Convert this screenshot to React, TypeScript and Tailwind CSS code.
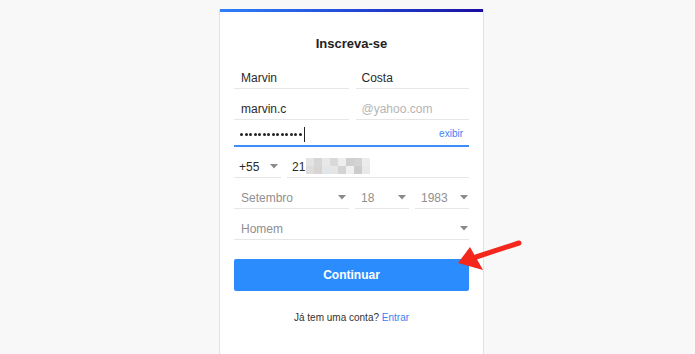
import React from "react";

const font = { fontFamily: '"Liberation Sans", Arial, sans-serif' };

function Caret() {
  return (
    <svg width="8" height="5" viewBox="0 0 8 5" className="shrink-0">
      <path d="M0 0h8L4 4.5z" fill="#8a8a8a" />
    </svg>
  );
}

// pixelated (blurred) phone digits
const mosaic = [
  ["#e4e4e4", "#d6d6d6", "#e8e8e8", "#d9d9d9", "#eeeeee", "#cfcfcf", "#d3d3d3", "#ececec"],
  ["#dfdcdc", "#d9d4d4", "#e2e6ea", "#e6e6e6", "#d4d4d4", "#f0f0f0", "#cccccc", "#e9e9e9"],
];

export default function App() {
  return (
    <div className="relative w-full h-[354px] overflow-hidden bg-[#f8f8f8]" style={font}>
      <div className="ml-[219px] mt-[9px] w-[265px] h-[345px] bg-white border-x border-[#e2e2e2]">
        <div className="h-[3px] bg-gradient-to-r from-[#2f80f7] via-[#2448d8] to-[#1a0aa0]" />

        <div className="px-[14px]">
          <h1 className="pt-[24px] text-center text-[13px] font-bold text-[#222] leading-[16px]">
            Inscreva-se
          </h1>

          {/* nome */}
          <div className="mt-[6px] flex gap-[7px]">
            <div className="flex-1 h-[31px] flex items-end pl-[7px] pb-[1px] border-b border-[#e6e6e6] text-[12px] text-[#2a2a2a]">
              Marvin
            </div>
            <div className="flex-1 h-[31px] flex items-end pl-[6px] pb-[1px] border-b border-[#e6e6e6] text-[12px] text-[#2a2a2a]">
              Costa
            </div>
          </div>

          {/* email */}
          <div className="flex gap-[7px]">
            <div className="flex-1 h-[31px] flex items-end pl-[7px] pb-[1px] border-b border-[#e6e6e6] text-[12px] text-[#2a2a2a]">
              marvin.c
            </div>
            <div className="flex-1 h-[31px] flex items-end pl-[6px] pb-[1px] border-b border-[#e6e6e6] text-[12px] text-[#b5b5b5]">
              @yahoo.com
            </div>
          </div>

          {/* senha */}
          <div className="h-[27px] flex items-end justify-between pl-[6px] pb-[3px] border-b-2 border-[#3d8ef8]">
            <div className="flex items-center h-[16px]">
              <div className="flex gap-[1.5px]">
                {Array.from({ length: 14 }).map((_, i) => (
                  <span key={i} className="w-[3px] h-[3px] rounded-full bg-[#222]" />
                ))}
              </div>
              <span className="ml-[2px] w-px h-[15px] bg-[#222]" />
            </div>
            <span className="text-[10px] text-[#3b82f6] pr-[6px] pb-[1px]">exibir</span>
          </div>

          {/* telefone */}
          <div className="flex gap-[6px]">
            <div className="w-[47px] h-[31px] flex items-end justify-between pl-[5px] pb-[1px] pr-[3px] border-b border-[#e6e6e6] text-[12px] text-[#2a2a2a]">
              <span>+55</span>
              <span className="pb-[7px]">
                <Caret />
              </span>
            </div>
            <div className="flex-1 h-[31px] flex items-end pl-[5px] pb-[1px] border-b border-[#e6e6e6] text-[12px] text-[#2a2a2a]">
              <span>21</span>
              <div className="ml-[1px] mb-[2px] flex flex-col">
                {mosaic.map((row, i) => (
                  <div key={i} className="flex">
                    {row.map((c, j) => (
                      <div key={j} className="w-[8px] h-[8px]" style={{ backgroundColor: c }} />
                    ))}
                  </div>
                ))}
              </div>
            </div>
          </div>

          {/* nascimento */}
          <div className="flex gap-[6px]">
            <div className="w-[115px] h-[31px] flex items-end justify-between pl-[7px] pb-[1px] pr-[3px] border-b border-[#e6e6e6] text-[12px] text-[#8f8f8f]">
              <span>Setembro</span>
              <span className="pb-[7px]">
                <Caret />
              </span>
            </div>
            <div className="w-[54px] h-[31px] flex items-end justify-between pl-[6px] pb-[1px] pr-[3px] border-b border-[#e6e6e6] text-[12px] text-[#8f8f8f]">
              <span>18</span>
              <span className="pb-[7px]">
                <Caret />
              </span>
            </div>
            <div className="flex-1 h-[31px] flex items-end justify-between pl-[6px] pb-[1px] pr-[1px] border-b border-[#e6e6e6] text-[12px] text-[#8f8f8f]">
              <span>1983</span>
              <span className="pb-[7px]">
                <Caret />
              </span>
            </div>
          </div>

          {/* sexo */}
          <div className="h-[31px] flex items-end justify-between pl-[7px] pb-[1px] pr-[1px] border-b border-[#e6e6e6] text-[12px] text-[#8f8f8f]">
            <span>Homem</span>
            <span className="pb-[7px]">
              <Caret />
            </span>
          </div>

          <button className="mt-[19px] w-full h-[32px] rounded-[2px] bg-[#2b8cfe] text-white text-[12px] font-bold">
            Continuar
          </button>

          <p className="mt-[19px] text-center text-[10px] text-[#333]">
            Já tem uma conta? <span className="text-[#3b7ff8]">Entrar</span>
          </p>
        </div>
      </div>

      {/* seta vermelha */}
      <svg
        className="absolute left-[450px] top-[234px]"
        width="76"
        height="44"
        viewBox="0 0 76 44"
      >
        <line x1="69" y1="9" x2="26" y2="23" stroke="#f3271b" strokeWidth="5" strokeLinecap="round" />
        <polygon points="8,29 20,13 33,36" fill="#f3271b" />
      </svg>
    </div>
  );
}
